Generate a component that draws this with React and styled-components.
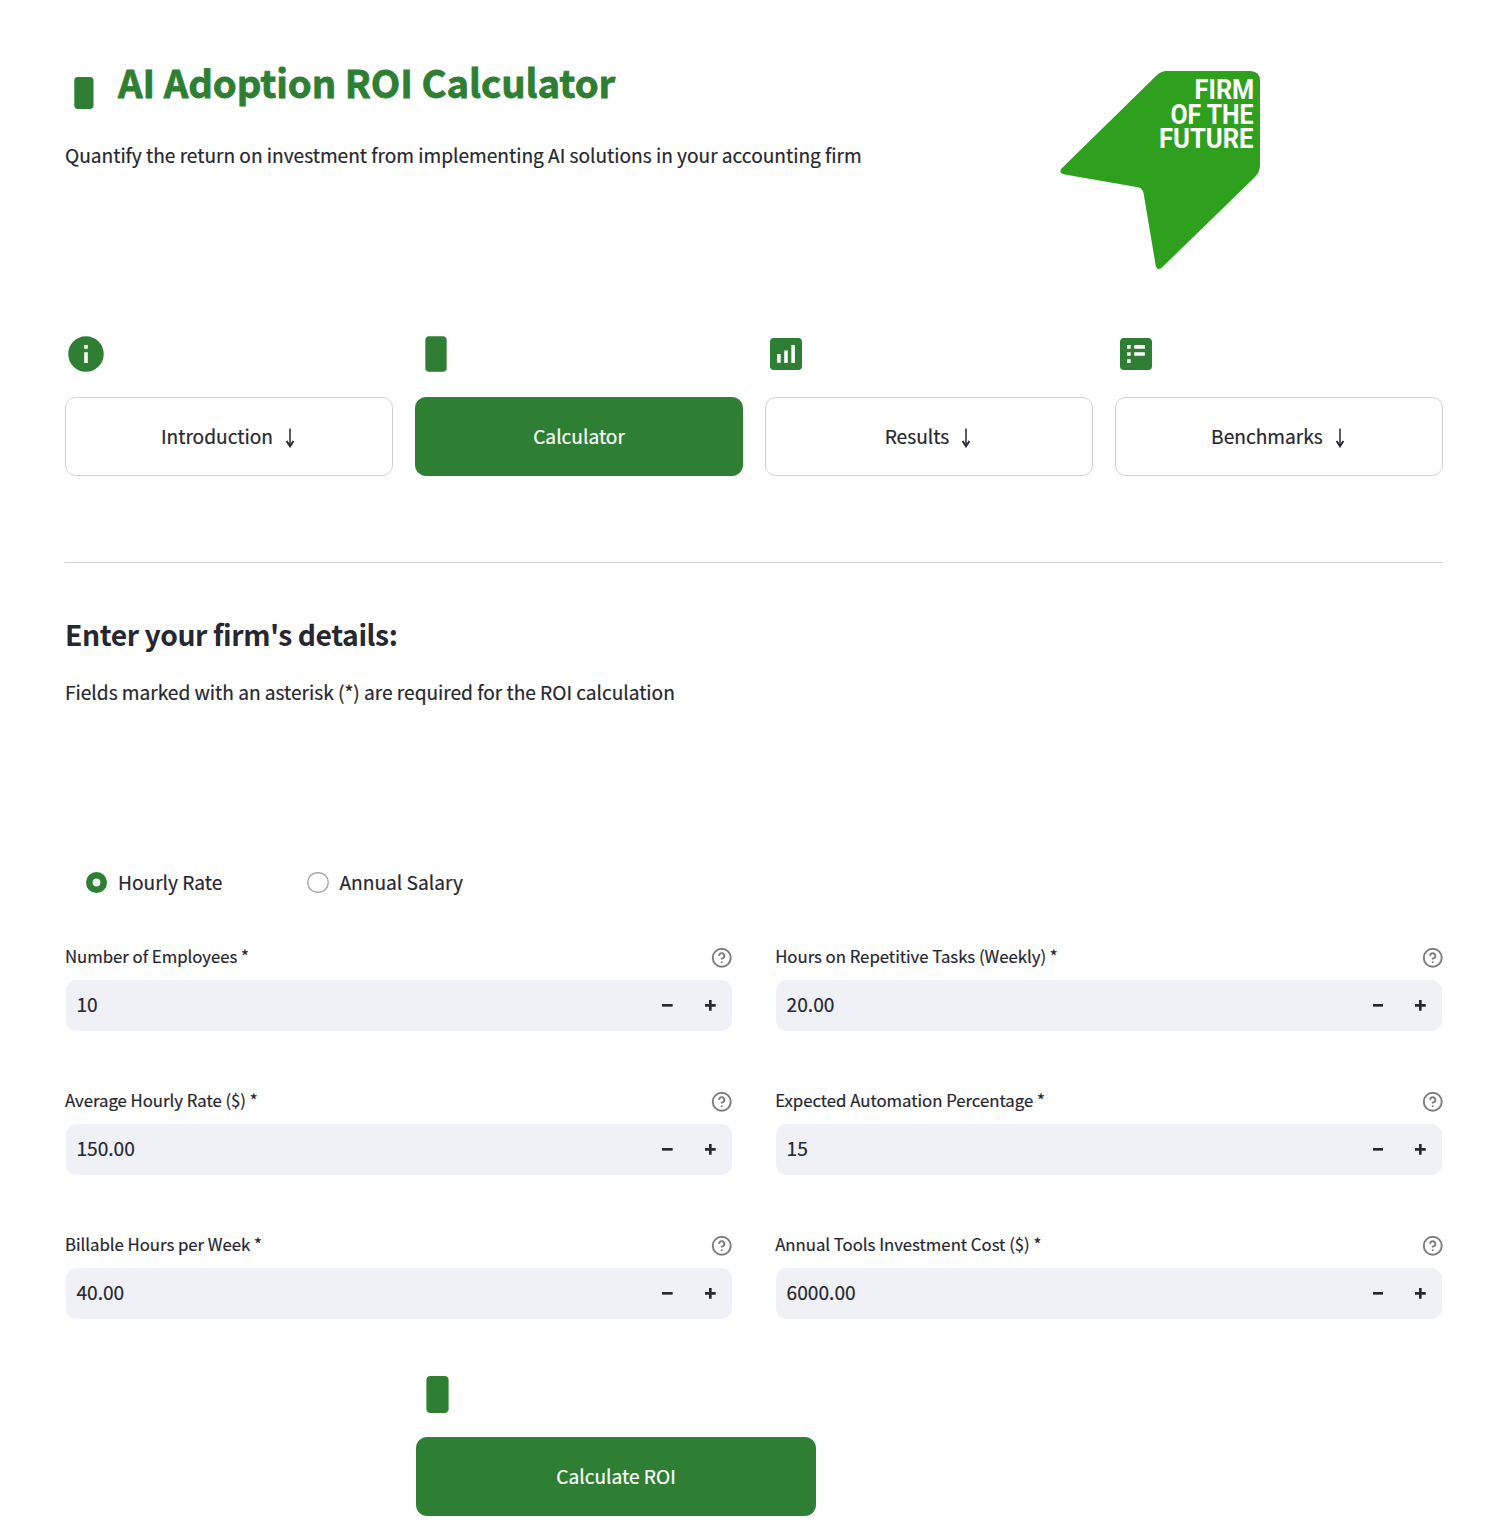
import React, { useState } from "react";
import styled, { createGlobalStyle } from "styled-components";

const GREEN = "#2e7f33";
const INK = "#262730";

const GlobalStyle = createGlobalStyle`
  *, *::before, *::after { box-sizing: border-box; }
  body {
    margin: 0;
    background: #fff;
    color: ${INK};
    font-family: "Noto Sans CJK SC", "Noto Sans", sans-serif;
    font-size: 19.15px;
    line-height: 32px;
    -webkit-text-stroke: 0.2px;
  }
  svg { display: block; flex: none; }
`;

const Page = styled.main`
  height: 1528px;
  padding: 58px 65px 0;
  overflow: hidden;
`;

const Header = styled.header`
  display: grid;
  grid-template-columns: 995px 200px;
  height: 275px;
`;

const TitleRow = styled.div`
  display: flex;
  align-items: flex-start;
  gap: 14px;
  height: 54px;
  margin-left: -1px;
  svg { margin-top: 15px; }
`;

const Title = styled.h1`
  margin: 1px 0 0;
  color: ${GREEN};
  font-size: 38.3px;
  font-weight: 700;
  line-height: 46px;
  letter-spacing: -0.07px;
  white-space: nowrap;
  -webkit-text-stroke: 0.8px;
`;

const Subtitle = styled.p`
  margin: 27px 0 0;
  letter-spacing: -0.022px;
  white-space: nowrap;
`;

const Logo = styled.svg`
  margin-top: 12px;
`;

const LogoText = styled.text`
  fill: #fff;
  font-family: Roboto, sans-serif;
  font-size: 27.2px;
  font-weight: 700;
  -webkit-text-stroke: 0;
`;

const Nav = styled.nav`
  display: grid;
  grid-template-columns: repeat(4, 328px);
  gap: 22px;
`;

const NavItem = styled.div`
  display: flex;
  flex-direction: column;
  gap: 21px;
`;

const Button = styled.button`
  display: flex;
  align-items: center;
  justify-content: center;
  width: 100%;
  height: 79px;
  padding: 0 0 1px;
  border: 1px solid ${(p) => (p.$primary ? GREEN : "#d0d0d4")};
  border-radius: 10.67px;
  background: ${(p) => (p.$primary ? GREEN : "#fff")};
  color: ${(p) => (p.$primary ? "#fff" : INK)};
  font: inherit;
  svg { margin: 4px -0.7px 0 8.8px; }
`;

const Divider = styled.hr`
  height: 1px;
  margin: 86px 0 0;
  border: 0;
  background: #d3d3d6;
`;

const Heading = styled.h2`
  margin: 50px 0 0;
  font-size: 28.3px;
  font-weight: 700;
  line-height: 42px;
  letter-spacing: -0.42px;
  -webkit-text-stroke: 0;
`;

const Note = styled.p`
  margin: 21px 0 0;
  letter-spacing: -0.022px;
`;

const RadioGroup = styled.div`
  display: flex;
  gap: 85px;
  margin: 158px 0 0 21px;
`;

const Radio = styled.label`
  display: flex;
  align-items: center;
  height: 32px;
  gap: 10.7px;
`;

const Dot = styled.span`
  width: 21.33px;
  height: 21.33px;
  margin-top: 1.4px;
  border-radius: 50%;
  background: ${(p) => (p.$on ? "#f0f2f6" : "#fff")};
  box-shadow: inset 0 0 0 ${(p) => (p.$on ? `6.6px ${GREEN}` : "1.4px #a6a7ac")};
`;

const Fields = styled.div`
  display: grid;
  grid-template-columns: 1fr 1fr;
  column-gap: 42.4px;
  row-gap: 49px;
  margin-top: 44px;
`;

const FieldTop = styled.div`
  display: flex;
  align-items: center;
  justify-content: space-between;
  height: 32px;
  margin-bottom: 6px;
  padding-bottom: 4px;
  svg { margin-top: 3.4px; }
`;

const Label = styled.label`
  font-size: 16.77px;
  line-height: 28px;
  letter-spacing: -0.025px;
`;

const NumberBox = styled.div`
  display: flex;
  align-items: stretch;
  height: 51px;
  margin: 0 1px 6px;
  padding-left: 10.4px;
  border-radius: 10.67px;
  background: #f0f1f6;
`;

const Value = styled.span`
  flex: 1;
  line-height: 49px;
`;

const Step = styled.button`
  display: grid;
  place-items: center;
  width: 42.67px;
  padding: 0;
  border: 0;
  background: none;
  color: ${INK};
`;

const Action = styled.section`
  display: flex;
  flex-direction: column;
  width: 400px;
  margin: 48px 0 0 351px;
  gap: 20px;
`;

const ICONS = {
  info: "M12 2C6.48 2 2 6.48 2 12s4.48 10 10 10 10-4.48 10-10S17.52 2 12 2zm1 15h-2v-6h2v6zm0-8h-2V7h2v2z",
  block: "M8 2h8c1.1 0 2 .9 2 2v16c0 1.1-.9 2-2 2H8c-1.1 0-2-.9-2-2V4c0-1.1.9-2 2-2z",
  chart: "M19 3H5c-1.1 0-2 .9-2 2v14c0 1.1.9 2 2 2h14c1.1 0 2-.9 2-2V5c0-1.1-.9-2-2-2zM9 17H7v-5h2v5zm4 0h-2v-7h2v7zm4 0h-2V7h2v10z",
  list: "M19 3H5c-1.1 0-2 .9-2 2v14c0 1.1.9 2 2 2h14c1.1 0 2-.9 2-2V5c0-1.1-.9-2-2-2zM9 17H7v-2h2v2zm0-4H7v-2h2v2zm0-4H7V7h2v2zm8 4h-6v-2h6v2zm0-4h-6V7h6v2z",
};

const Icon = ({ name, size = 43, box = "0.19 0.19 24.19 24.19" }) => (
  <svg width={size} height={size} viewBox={box} fill={GREEN}>
    <path d={ICONS[name]} />
  </svg>
);

const ArrowDown = () => (
  <svg width="16" height="20" viewBox="0 0 16 20" fill="none" stroke={INK}>
    <path d="M8 0.5v17" strokeWidth="1.5" />
    <path d="M4.6 13L8 18.3l3.4-5.3" strokeWidth="1.9" />
  </svg>
);

const HelpIcon = () => (
  <svg
    width="21.5"
    height="21.5"
    viewBox="0 0 24 24"
    fill="none"
    stroke="#7f8086"
    strokeWidth="2.2"
    strokeLinecap="round"
    strokeLinejoin="round"
  >
    <circle cx="12" cy="12" r="10" />
    <path d="M9.09 9a3 3 0 0 1 5.83 1c0 2-3 3-3 3" />
    <path d="M12 17h.01" />
  </svg>
);

const StepIcon = ({ plus }) => (
  <svg width="10.67" height="10.67" viewBox="0 0 8 8" fill="currentColor">
    <path d={plus ? "M3 0v3H0v2h3v3h2V5h3V3H5V0z" : "M0 3v2h8V3z"} />
  </svg>
);

const FirmLogo = () => (
  <Logo width="200" height="200" viewBox="0 0 200 200">
    <path
      fill="#2ea01e"
      d="M107 1H190Q200 1 200 11V95Q200 102 195 107L102.5 197Q97.5 201.5 95.7 195.5L83.7 124Q83 118.3 78 117.3L3.5 104.3Q-1.5 102.5 1.5 98.5L96.5 5.5Q101 1 107 1Z"
    />
    <LogoText>
      <tspan x="134.6" y="29" textLength="59.7" lengthAdjust="spacingAndGlyphs">FIRM</tspan>
      <tspan x="110.5" y="53.5" textLength="83" lengthAdjust="spacingAndGlyphs">OF THE</tspan>
      <tspan x="99" y="77.7" textLength="94.5" lengthAdjust="spacingAndGlyphs">FUTURE</tspan>
    </LogoText>
  </Logo>
);

const TABS = [
  { label: "Introduction", icon: "info" },
  { label: "Calculator", icon: "block", active: true },
  { label: "Results", icon: "chart" },
  { label: "Benchmarks", icon: "list" },
];

const FIELDS = [
  ["Number of Employees *", 10, 0],
  ["Hours on Repetitive Tasks (Weekly) *", 20, 2],
  ["Average Hourly Rate ($) *", 150, 2],
  ["Expected Automation Percentage *", 15, 0],
  ["Billable Hours per Week *", 40, 2],
  ["Annual Tools Investment Cost ($) *", 6000, 2],
];

function NumberField({ label, initial, decimals }) {
  const [value, setValue] = useState(initial);
  return (
    <div>
      <FieldTop>
        <Label>{label}</Label>
        <HelpIcon />
      </FieldTop>
      <NumberBox>
        <Value>{value.toFixed(decimals)}</Value>
        <Step aria-label="Decrease" onClick={() => setValue(value - 1)}>
          <StepIcon />
        </Step>
        <Step aria-label="Increase" onClick={() => setValue(value + 1)}>
          <StepIcon plus />
        </Step>
      </NumberBox>
    </div>
  );
}

export default function App() {
  const [mode, setMode] = useState("Hourly Rate");
  return (
    <Page>
      <GlobalStyle />
      <Header>
        <div>
          <TitleRow>
            <Icon name="block" size={40} box="-0.44 -0.5 25 25" />
            <Title>AI Adoption ROI Calculator</Title>
          </TitleRow>
          <Subtitle>
            Quantify the return on investment from implementing AI solutions in your accounting firm
          </Subtitle>
        </div>
        <FirmLogo />
      </Header>
      <Nav>
        {TABS.map((tab) => (
          <NavItem key={tab.label}>
            <Icon name={tab.icon} />
            <Button $primary={tab.active}>
              {tab.label}
              {!tab.active && <ArrowDown />}
            </Button>
          </NavItem>
        ))}
      </Nav>
      <Divider />
      <Heading>Enter your firm's details:</Heading>
      <Note>Fields marked with an asterisk (*) are required for the ROI calculation</Note>
      <RadioGroup>
        {["Hourly Rate", "Annual Salary"].map((option) => (
          <Radio key={option} onClick={() => setMode(option)}>
            <Dot $on={mode === option} />
            {option}
          </Radio>
        ))}
      </RadioGroup>
      <Fields>
        {FIELDS.map(([label, initial, decimals]) => (
          <NumberField key={label} label={label} initial={initial} decimals={decimals} />
        ))}
      </Fields>
      <Action>
        <Icon name="block" size={44} box="0.38 0.38 23.78 23.78" />
        <Button $primary>Calculate ROI</Button>
      </Action>
    </Page>
  );
}
